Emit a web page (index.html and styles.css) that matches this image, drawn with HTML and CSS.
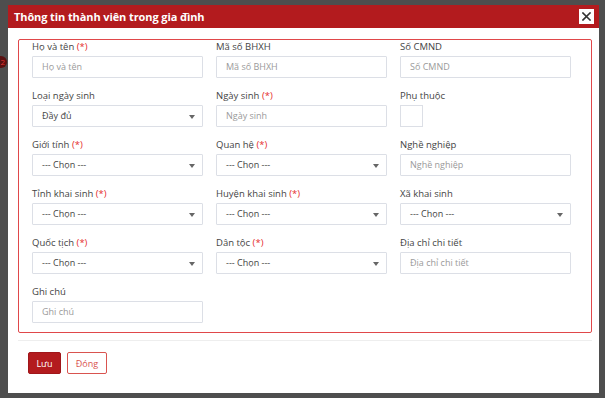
FILE: index.html
```html
<!DOCTYPE html>
<html lang="vi">
<head>
<meta charset="utf-8">
<title>Thông tin thành viên trong gia đình</title>
<link rel="stylesheet" href="styles.css">
</head>
<body>
<span class="bg-badge">2</span>
<div class="modal">
  <div class="modal-header">
    <span class="modal-title">Thông tin thành viên trong gia đình</span>
    <button class="close-btn" type="button" aria-label="Đóng">
      <svg width="9" height="9" viewBox="0 0 9 9"><path d="M1 1L8 8M8 1L1 8" stroke="#333" stroke-width="1.6" stroke-linecap="square"/></svg>
    </button>
  </div>
  <div class="modal-body">
    <div class="form-box">
      <div class="field"><label>Họ và tên <span class="req">(*)</span></label><div class="input ph">Họ và tên</div></div>
      <div class="field"><label>Mã số BHXH</label><div class="input ph">Mã số BHXH</div></div>
      <div class="field"><label>Số CMND</label><div class="input ph">Số CMND</div></div>

      <div class="field"><label>Loại ngày sinh</label><div class="input select">Đầy đủ</div></div>
      <div class="field"><label>Ngày sinh <span class="req">(*)</span></label><div class="input ph">Ngày sinh</div></div>
      <div class="field"><label>Phụ thuộc</label><div class="check"></div></div>

      <div class="field"><label>Giới tính <span class="req">(*)</span></label><div class="input select">--- Chọn ---</div></div>
      <div class="field"><label>Quan hệ <span class="req">(*)</span></label><div class="input select">--- Chọn ---</div></div>
      <div class="field"><label>Nghề nghiệp</label><div class="input ph">Nghề nghiệp</div></div>

      <div class="field"><label>Tỉnh khai sinh <span class="req">(*)</span></label><div class="input select">--- Chọn ---</div></div>
      <div class="field"><label>Huyện khai sinh <span class="req">(*)</span></label><div class="input select">--- Chọn ---</div></div>
      <div class="field"><label>Xã khai sinh</label><div class="input select">--- Chọn ---</div></div>

      <div class="field"><label>Quốc tịch <span class="req">(*)</span></label><div class="input select">--- Chọn ---</div></div>
      <div class="field"><label>Dân tộc <span class="req">(*)</span></label><div class="input select">--- Chọn ---</div></div>
      <div class="field"><label>Địa chỉ chi tiết</label><div class="input ph">Địa chỉ chi tiết</div></div>

      <div class="field"><label>Ghi chú</label><div class="input ph">Ghi chú</div></div>
    </div>
    <div class="modal-footer">
      <button class="btn btn-save" type="button">Lưu</button>
      <button class="btn btn-close" type="button">Đóng</button>
    </div>
  </div>
</div>
</body>
</html>
```
FILE: styles.css
```css
* { box-sizing: border-box; }
html, body { margin: 0; padding: 0; }
body {
  width: 605px;
  height: 398px;
  background: #4e4e4e;
  font-family: "Open Sans", "Liberation Sans", sans-serif;
  overflow: hidden;
  padding: 5px 0 0 8px;
  position: relative;
}
.bg-badge {
  position: absolute;
  left: -5px;
  top: 56px;
  width: 12px;
  height: 12px;
  border-radius: 50%;
  background: #5a1010;
  color: #d33;
  font-size: 8px;
  line-height: 12px;
  text-align: right;
  padding-right: 2px;
}
.modal {
  width: 591px;
  height: 388px;
  background: #fff;
  display: flex;
  flex-direction: column;
}
.modal-header {
  height: 23px;
  background: #b31b1e;
  display: flex;
  align-items: center;
  justify-content: space-between;
  padding: 0 5px 0 6px;
}
.modal-title {
  color: #fff;
  font-weight: 700;
  font-size: 11px;
  letter-spacing: -0.1px;
}
.close-btn {
  width: 15px;
  height: 15px;
  background: #fff;
  border: 0;
  padding: 0;
  display: flex;
  align-items: center;
  justify-content: center;
}
.modal-body {
  padding: 11px 7px 0 10px;
}
.form-box {
  border: 1px solid #e0474a;
  border-radius: 2px;
  padding: 0 19px 9px 13px;
  display: grid;
  grid-template-columns: repeat(3, 171px);
  column-gap: 13px;
  row-gap: 11px;
}
.field {
  display: flex;
  flex-direction: column;
}
.field label {
  font-size: 9.5px;
  line-height: 14px;
  color: #444;
  margin-bottom: 2px;
}
.req { color: #e52c2c; }
.input {
  height: 22px;
  border: 1px solid #dcdfe6;
  border-radius: 1px;
  font-size: 9px;
  line-height: 20px;
  padding: 0 9px;
  color: #444;
  position: relative;
}
.input.ph { color: #9a9a9a; }
.input.select::after {
  content: "";
  position: absolute;
  right: 7px;
  top: 9px;
  border-left: 3px solid transparent;
  border-right: 3px solid transparent;
  border-top: 4px solid #666;
}
.check {
  width: 23px;
  height: 22px;
  border: 1px solid #dcdfe6;
}
.modal-footer {
  margin-top: 7px;
  border-top: 1px solid #eeeeee;
  padding: 11px 0 0 10px;
  display: flex;
  gap: 6px;
}
.btn {
  height: 22px;
  font-family: "Open Sans", "Liberation Sans", sans-serif;
  font-size: 9px;
  border-radius: 2px;
  padding: 0;
}
.btn-save {
  width: 33px;
  background: #b31b1e;
  color: #fff;
  border: 1px solid #a0161a;
}
.btn-close {
  width: 40px;
  background: #fff;
  color: #d9534f;
  border: 1px solid #d9534f;
}
```
